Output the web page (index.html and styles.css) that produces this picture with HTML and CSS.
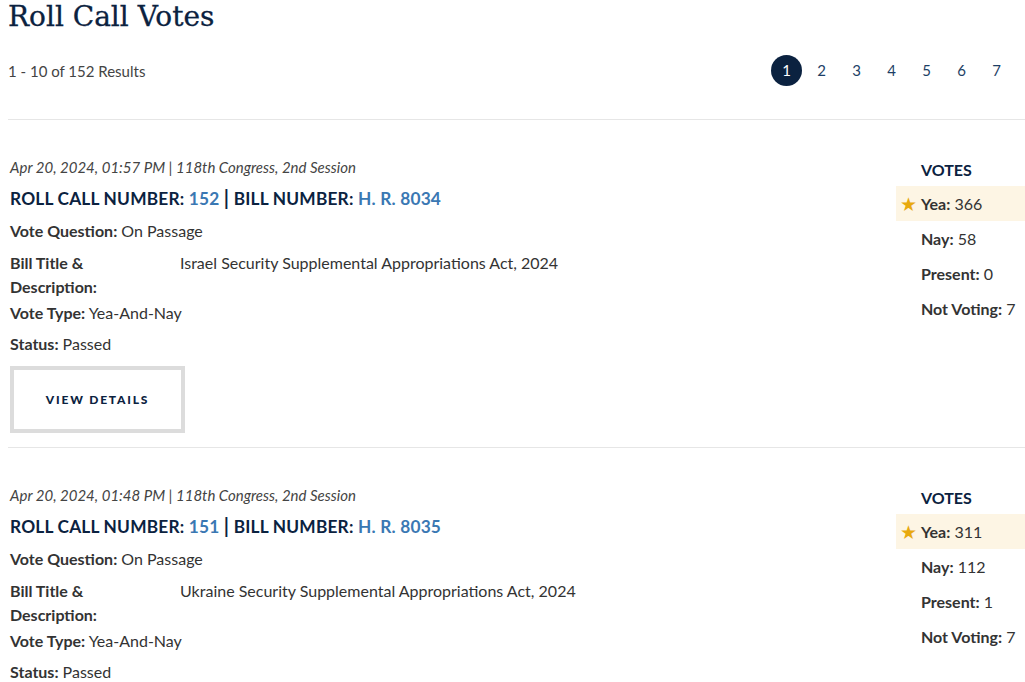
FILE: index.html
```html
<!DOCTYPE html>
<html>
<head>
    <meta charset="utf-8">
    <title>Roll Call Votes</title>
    <link rel="stylesheet" href="styles.css">
</head>
<body>
    <main class="page">
        <h1>Roll Call Votes</h1>

        <div class="results-bar">
            <span class="count">1 - 10 of 152 Results</span>
            <nav class="pager">
                <a class="current" href="#">1</a>
                <a href="#">2</a>
                <a href="#">3</a>
                <a href="#">4</a>
                <a href="#">5</a>
                <a href="#">6</a>
                <a href="#">7</a>
            </nav>
        </div>

        <article class="vote">
            <div class="vote-info">
                <p class="when">Apr 20, 2024, 01:57 PM | 118th Congress, 2nd Session</p>
                <h2>Roll Call Number: <a href="#">152</a> <span class="sep">|</span> Bill Number: <a href="#">H. R. 8034</a></h2>
                <div class="field"><strong>Vote Question:</strong> On Passage</div>
                <div class="field bill">
                    <strong>Bill Title &amp; Description:</strong>
                    <span>Israel Security Supplemental Appropriations Act, 2024</span>
                </div>
                <div class="field"><strong>Vote Type:</strong> Yea-And-Nay</div>
                <div class="field last"><strong>Status:</strong> Passed</div>
                <a class="btn" href="#">View Details</a>
            </div>
            <aside class="tally">
                <h3>Votes</h3>
                <div class="row win"><span class="star">&#9733;</span><strong>Yea:</strong> 366</div>
                <div class="row"><strong>Nay:</strong> 58</div>
                <div class="row"><strong>Present:</strong> 0</div>
                <div class="row"><strong>Not Voting:</strong> 7</div>
            </aside>
        </article>

        <article class="vote">
            <div class="vote-info">
                <p class="when">Apr 20, 2024, 01:48 PM | 118th Congress, 2nd Session</p>
                <h2>Roll Call Number: <a href="#">151</a> <span class="sep">|</span> Bill Number: <a href="#">H. R. 8035</a></h2>
                <div class="field"><strong>Vote Question:</strong> On Passage</div>
                <div class="field bill">
                    <strong>Bill Title &amp; Description:</strong>
                    <span>Ukraine Security Supplemental Appropriations Act, 2024</span>
                </div>
                <div class="field"><strong>Vote Type:</strong> Yea-And-Nay</div>
                <div class="field last"><strong>Status:</strong> Passed</div>
                <a class="btn" href="#">View Details</a>
            </div>
            <aside class="tally">
                <h3>Votes</h3>
                <div class="row win"><span class="star">&#9733;</span><strong>Yea:</strong> 311</div>
                <div class="row"><strong>Nay:</strong> 112</div>
                <div class="row"><strong>Present:</strong> 1</div>
                <div class="row"><strong>Not Voting:</strong> 7</div>
            </aside>
        </article>
    </main>
</body>
</html>
```

FILE: styles.css
```css
body {
    margin: 0;
    padding: 0;
    background-color: #fff;
    color: #333;
    font-family: Lato, "Liberation Sans", sans-serif;
    font-size: 16px;
}

a {
    text-decoration: none;
}

.page {
    margin-left: 8px;
}

h1 {
    margin: 0;
    font-family: "DejaVu Serif", serif;
    font-weight: normal;
    font-size: 28px;
    line-height: 34px;
    color: #0b2240;
    -webkit-text-stroke: 0.3px #0b2240;
}

.results-bar {
    display: flex;
    justify-content: space-between;
    align-items: center;
    height: 31px;
    margin-top: 21px;
    padding-bottom: 33px;
    border-bottom: 1px solid #e6e6e6;
}

.count {
    font-size: 15px;
    color: #444;
}

.pager {
    display: flex;
    align-items: center;
    margin-right: 13px;
}

.pager a {
    width: 31px;
    height: 31px;
    line-height: 31px;
    text-align: center;
    margin-left: 4px;
    color: #1d3f66;
    font-size: 15px;
    border-radius: 50%;
}

.pager a.current {
    background-color: #0b2240;
    color: #fff;
}

.vote {
    display: flex;
    justify-content: space-between;
    padding: 38px 0 14px 2px;
    border-bottom: 1px solid #e6e6e6;
}

.when {
    margin: 0;
    font-style: italic;
    font-size: 15px;
    line-height: 18px;
    color: #444;
}

h2 {
    margin: 9px 0 0;
    font-size: 17.3px;
    line-height: 24px;
    text-transform: uppercase;
    color: #0b2240;
    letter-spacing: 0.2px;
}

h2 a {
    color: #3a78b3;
}

.sep {
    font-size: 20px;
}

.field {
    margin-top: 8px;
    line-height: 24px;
}

.field.last {
    margin-top: 7px;
}

.field strong {
    color: #333;
}

.bill {
    display: grid;
    grid-template-columns: 170px 1fr;
    margin-bottom: -6px;
}

.bill strong {
    width: 100px;
}

.btn {
    display: inline-block;
    margin-top: 10px;
    width: 167px;
    height: 59px;
    line-height: 59px;
    text-align: center;
    border: 4px solid #dcdcdc;
    font-size: 12px;
    font-weight: 900;
    letter-spacing: 1.8px;
    text-transform: uppercase;
    color: #0b2240;
}

.tally {
    width: 129px;
    padding-top: 0;
}

.tally h3 {
    margin: 0 0 4px 25px;
    font-size: 16px;
    line-height: 24px;
    text-transform: uppercase;
    color: #0b2240;
}

.tally .row {
    position: relative;
    height: 35px;
    line-height: 35px;
    padding-left: 25px;
    color: #333;
}

.tally .row strong {
    color: #333;
}

.tally .win {
    background-color: #fdf5e4;
}

.star {
    position: absolute;
    left: 4px;
    top: 0;
    color: #e8a90e;
    font-size: 19px;
}
```
